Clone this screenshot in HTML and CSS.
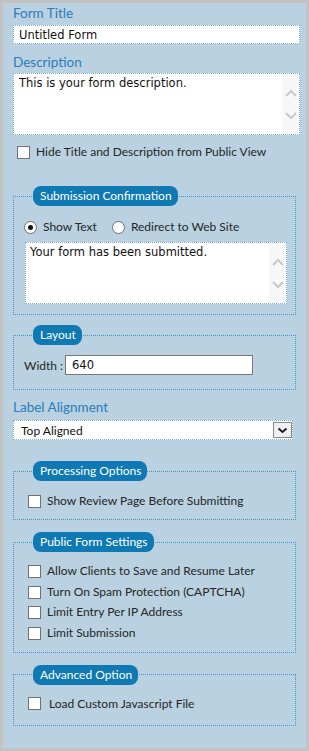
FILE: index.html
```html
<!DOCTYPE html>
<html lang="en">
<head>
    <meta charset="UTF-8">
    <meta name="viewport" content="width=device-width, initial-scale=1.0">
    <title>Form Properties</title>
    <link rel="stylesheet" href="styles.css">
</head>
<body>
    <div class="panel">
        <label class="field-label" for="formTitle">Form Title</label>
        <input type="text" id="formTitle" class="text-input" value="Untitled Form">

        <label class="field-label desc-label" for="formDesc">Description</label>
        <div class="area-box">
            <textarea id="formDesc" class="area-text">This is your form description.</textarea>
            <div class="fake-scroll">
                <svg width="12" height="8" viewBox="0 0 12 8"><path d="M1 7 L6 2 L11 7" /></svg>
                <svg width="12" height="8" viewBox="0 0 12 8"><path d="M1 1 L6 6 L11 1" /></svg>
            </div>
        </div>

        <label class="check-row hide-row"><input type="checkbox" class="box"><span>Hide Title and Description from Public View</span></label>

        <fieldset class="group group-confirm">
            <legend>Submission Confirmation</legend>
            <div class="radio-row">
                <label class="radio-item"><input type="radio" name="confirm" class="dot" checked><span>Show Text</span></label>
                <label class="radio-item"><input type="radio" name="confirm" class="dot"><span>Redirect to Web Site</span></label>
            </div>
            <div class="area-box confirm-area">
                <textarea class="area-text">Your form has been submitted.</textarea>
                <div class="fake-scroll">
                    <svg width="12" height="8" viewBox="0 0 12 8"><path d="M1 7 L6 2 L11 7" /></svg>
                    <svg width="12" height="8" viewBox="0 0 12 8"><path d="M1 1 L6 6 L11 1" /></svg>
                </div>
            </div>
        </fieldset>

        <fieldset class="group group-layout">
            <legend>Layout</legend>
            <div class="width-row">
                <label for="formWidth">Width :</label>
                <input type="text" id="formWidth" class="width-input" value="640">
            </div>
        </fieldset>

        <label class="field-label align-label">Label Alignment</label>
        <div class="select-box">
            <span>Top Aligned</span>
            <span class="select-btn">
                <svg width="11" height="7" viewBox="0 0 11 7"><path d="M1.5 1.5 L5.5 5 L9.5 1.5" /></svg>
            </span>
        </div>

        <fieldset class="group group-process">
            <legend>Processing Options</legend>
            <label class="check-row"><input type="checkbox" class="box"><span>Show Review Page Before Submitting</span></label>
        </fieldset>

        <fieldset class="group group-public">
            <legend>Public Form Settings</legend>
            <label class="check-row"><input type="checkbox" class="box"><span>Allow Clients to Save and Resume Later</span></label>
            <label class="check-row"><input type="checkbox" class="box"><span>Turn On Spam Protection (CAPTCHA)</span></label>
            <label class="check-row"><input type="checkbox" class="box"><span>Limit Entry Per IP Address</span></label>
            <label class="check-row"><input type="checkbox" class="box"><span>Limit Submission</span></label>
        </fieldset>

        <fieldset class="group group-advanced">
            <legend>Advanced Option</legend>
            <label class="check-row wide-gap"><input type="checkbox" class="box"><span>Load Custom Javascript File</span></label>
        </fieldset>
    </div>
</body>
</html>
```

FILE: styles.css
```css
body {
    margin: 0;
    background-color: #c3c3c3;
    font-family: Lato, "Liberation Sans", sans-serif;
    font-size: 12px;
    color: #262626;
}
.panel {
    box-sizing: border-box;
    margin: 3px;
    height: 745px;
    padding: 1px 6px 0 10px;
    background-color: #b9d1e0;
}
.field-label {
    display: block;
    font-size: 13.5px;
    line-height: 18px;
    color: #2b7dbb;
}
.text-input {
    box-sizing: border-box;
    display: block;
    width: 287px;
    height: 19px;
    margin: 3px 0 0 0;
    padding: 0 5px;
    border: 1px dotted #7fb3d6;
    background-color: #fff;
    font-family: "DejaVu Sans", Verdana, sans-serif;
    font-size: 11.5px;
    color: #111;
    outline: none;
}
.desc-label {
    margin-top: 9px;
}
.area-box {
    box-sizing: border-box;
    display: flex;
    width: 287px;
    height: 62px;
    margin-top: 2px;
    border: 1px dotted #7fb3d6;
    background-color: #fff;
}
.area-text {
    flex: 1;
    margin: 0;
    padding: 3px 5px;
    border: none;
    resize: none;
    overflow: hidden;
    background: transparent;
    font-family: "DejaVu Sans", Verdana, sans-serif;
    font-size: 11.5px;
    line-height: 13px;
    color: #111;
    outline: none;
}
.fake-scroll {
    width: 17px;
    display: flex;
    flex-direction: column;
    align-items: center;
    gap: 15px;
    padding-top: 15px;
    box-sizing: border-box;
    background-color: #f7f7f7;
}
.fake-scroll svg path {
    fill: none;
    stroke: #c9c9c9;
    stroke-width: 2;
}
.check-row {
    display: flex;
    align-items: center;
    line-height: 20px;
    padding-left: 4px;
}
.hide-row {
    margin-top: 7px;
}
.box {
    appearance: none;
    -webkit-appearance: none;
    box-sizing: border-box;
    width: 13px;
    height: 13px;
    margin: 0 6px 0 0;
    border: 1px solid #717171;
    background-color: #fff;
}
.wide-gap .box {
    margin-right: 8px;
}
.group {
    margin: 0;
    padding: 0 8px 0 10px;
    width: 283px;
    box-sizing: border-box;
    border: 1px dotted #3f97cc;
}
.group legend {
    margin-left: 9px;
    padding: 0 6px 0 7px;
    height: 20px;
    line-height: 20px;
    border-radius: 8px;
    background-color: #0e79b2;
    color: #fff;
    font-size: 12px;
}
.group-confirm {
    margin-top: 24px;
    padding-top: 11px;
    padding-bottom: 10px;
}
.radio-row {
    display: flex;
    line-height: 20px;
    gap: 15px;
}
.radio-item {
    display: flex;
    align-items: center;
}
.dot {
    appearance: none;
    -webkit-appearance: none;
    box-sizing: border-box;
    width: 13px;
    height: 13px;
    margin: 0 6px 0 0;
    border: 1px solid #6f6f6f;
    border-radius: 50%;
    background-color: #fff;
    display: flex;
    align-items: center;
    justify-content: center;
}
.dot:checked::after {
    content: "";
    width: 5px;
    height: 5px;
    border-radius: 50%;
    background-color: #111;
}
.confirm-area {
    width: 262px;
    margin-top: 5px;
    margin-left: 1px;
}
.confirm-area .area-text {
    padding-left: 4px;
}
.group-layout {
    margin-top: 10px;
    padding-top: 10px;
    padding-bottom: 14px;
}
.width-row {
    display: flex;
    align-items: center;
}
.width-row label {
    width: 41px;
}
.width-input {
    box-sizing: border-box;
    width: 188px;
    height: 20px;
    margin: 0;
    padding: 0 6px;
    border: 1px solid #777;
    background-color: #fff;
    font-family: "DejaVu Sans", Verdana, sans-serif;
    font-size: 11.5px;
    color: #111;
    outline: none;
}
.align-label {
    margin-top: 8px;
}
.select-box {
    box-sizing: border-box;
    display: flex;
    align-items: center;
    justify-content: space-between;
    width: 280px;
    height: 20px;
    margin-top: 4px;
    padding: 0 0 0 7px;
    border: 1px dotted #7fb3d6;
    background-color: #fff;
    color: #111;
}
.select-btn {
    box-sizing: border-box;
    width: 19px;
    height: 16px;
    display: flex;
    align-items: center;
    justify-content: center;
    border: 1px solid #8a8a8a;
    background-color: #f0f0f0;
}
.select-btn path {
    fill: none;
    stroke: #1d1d30;
    stroke-width: 2;
}
.group-process {
    margin-top: 21px;
    padding-top: 10px;
    padding-bottom: 8px;
}
.group-public {
    margin-top: 12px;
    padding-top: 9px;
    padding-bottom: 8px;
}
.group-public .check-row {
    line-height: 20.7px;
}
.group-advanced {
    margin-top: 12px;
    padding-top: 9px;
    padding-bottom: 11px;
}
```
